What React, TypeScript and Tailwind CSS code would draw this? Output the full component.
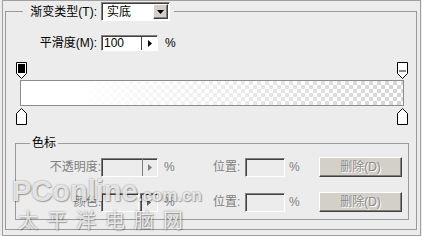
import React from "react";

const sunken =
  "border border-t-[#808080] border-l-[#808080] border-b-white border-r-white shadow-[inset_1px_1px_0_#404040]";
const raised =
  "bg-[#d4d0c8] border border-t-white border-l-white border-b-[#404040] border-r-[#404040] shadow-[inset_-1px_-1px_0_#808080]";

function RightTri({ color }: { color: string }) {
  return (
    <svg width="4" height="7" viewBox="0 0 4 7">
      <path d="M0 0L4 3.5L0 7Z" fill={color} />
    </svg>
  );
}

function DownTri() {
  return (
    <svg width="7" height="4" viewBox="0 0 7 4">
      <path d="M0 0H7L3.5 4Z" fill="#000" />
    </svg>
  );
}

function StopDown({ variant }: { variant: "black" | "gray" }) {
  return (
    <svg width="11" height="17" viewBox="0 0 11 17">
      <path d="M0.5 0.5H10.5V11.5L5.5 16.5L0.5 11.5Z" fill="#fff" stroke="#000" />
      {variant === "black" ? (
        <rect x="2" y="2" width="7" height="9" fill="#000" />
      ) : (
        <rect x="2" y="8" width="7" height="2" fill="#8a8a8a" />
      )}
    </svg>
  );
}

function StopUp() {
  return (
    <svg width="11" height="17" viewBox="0 0 11 17">
      <path d="M5.5 0.5L10.5 5.5V16.5H0.5V5.5Z" fill="#fff" stroke="#000" />
    </svg>
  );
}

function DeleteButton() {
  return (
    <div
      className={`${raised} flex h-[20px] w-[83px] items-center justify-center text-[#8a8a8a] [text-shadow:1px_1px_0_#fff]`}
    >
      删除(D)
    </div>
  );
}

export default function App() {
  return (
    <div className="relative h-[236px] w-[422px] overflow-hidden bg-[#ececec] pl-[2px] pr-[1px] font-['Liberation_Sans','Noto_Sans_CJK_SC',sans-serif] text-[12px] leading-none text-black">
      <div className="h-full border border-[#a0a0a0] pl-[2px] pr-[3px]">
        <fieldset className="mt-[1px] border border-[#9a9a9a] px-0 pb-[9px]">
          <legend className="ml-[17px] px-[4px]">
            <div className="flex items-center">
              <span className="w-[70px] whitespace-nowrap text-right">渐变类型(T):</span>
              <div className={`${sunken} ml-[4px] flex h-[19px] w-[69px] items-center bg-white`}>
                <span className="pl-[5px]">实底</span>
                <div className={`${raised} ml-auto mr-[1px] flex h-[15px] w-[15px] items-center justify-center`}>
                  <DownTri />
                </div>
              </div>
            </div>
          </legend>

          <div className="mt-[14px] flex items-center">
            <span className="w-[91px] whitespace-nowrap text-right">平滑度(M):</span>
            <div className={`${sunken} ml-[4px] flex h-[16px] w-[57px] items-center bg-white`}>
              <span className="w-[39px] pl-[2px]">100</span>
              <div className="flex h-full flex-1 items-center justify-center border-l border-[#404040]">
                <RightTri color="#000" />
              </div>
            </div>
            <span className="ml-[7px]">%</span>
          </div>

          <div className="ml-[10px] mt-[11px] w-[392px]">
            <div className="flex h-[17px] justify-between">
              <StopDown variant="black" />
              <StopDown variant="gray" />
            </div>
            <div className="ml-[4px] mt-[1px] h-[26px] w-[384px] border border-[#8c8c8c] [background-image:linear-gradient(to_right,#fff_15%,rgba(255,255,255,0)),repeating-conic-gradient(#d4d4d4_0%_25%,#ffffff_0%_50%)] [background-size:100%_100%,8px_8px]" />
            <div className="mt-[2px] flex h-[17px] justify-between">
              <StopUp />
              <StopUp />
            </div>
          </div>

          <fieldset className="ml-[9px] mt-[11px] w-[394px] border border-[#9a9a9a] px-0 pb-[7px]">
            <legend className="ml-[14px] px-[2px] leading-[14px]">色标</legend>

            <div className="mt-[7px] flex h-[20px] items-center text-[#808080]">
              <span className="w-[85px] whitespace-nowrap text-right">不透明度:</span>
              <div className={`${sunken} flex h-[19px] w-[57px] items-center`}>
                <span className="w-[40px]" />
                <div className="flex h-full flex-1 items-center justify-center border-l border-[#808080]">
                  <RightTri color="#808080" />
                </div>
              </div>
              <span className="w-[55px] pl-[6px]">%</span>
              <span className="w-[30px] whitespace-nowrap">位置:</span>
              <div className={`${sunken} ml-[2px] h-[19px] w-[40px]`} />
              <span className="w-[34px] pl-[4px]">%</span>
              <DeleteButton />
            </div>

            <div className="mt-[15px] flex h-[20px] items-center text-[#808080]">
              <span className="w-[85px] whitespace-nowrap text-right">颜色:</span>
              <div className={`${sunken} h-[19px] w-[38px]`} />
              <div className={`${sunken} ml-[1px] flex h-[19px] w-[18px] items-center justify-center`}>
                <RightTri color="#606060" />
              </div>
              <span className="w-[55px] pl-[6px]">%</span>
              <span className="w-[30px] whitespace-nowrap">位置:</span>
              <div className={`${sunken} ml-[2px] h-[19px] w-[40px]`} />
              <span className="w-[34px] pl-[4px]">%</span>
              <DeleteButton />
            </div>
          </fieldset>
        </fieldset>
      </div>

      <div className="pointer-events-none absolute left-[12px] top-[177px] text-white/80 [text-shadow:0_0_2px_rgba(0,0,0,0.45),1px_1px_1px_rgba(0,0,0,0.25)]">
        <div className="flex items-baseline leading-none">
          <span className="text-[29px] font-bold">PConline</span>
          <span className="text-[17px] font-bold">.com.cn</span>
        </div>
        <div className="mt-[5px] whitespace-nowrap pl-[6px] text-[20px] leading-none tracking-[9px]">
          太平洋电脑网
        </div>
      </div>
    </div>
  );
}
